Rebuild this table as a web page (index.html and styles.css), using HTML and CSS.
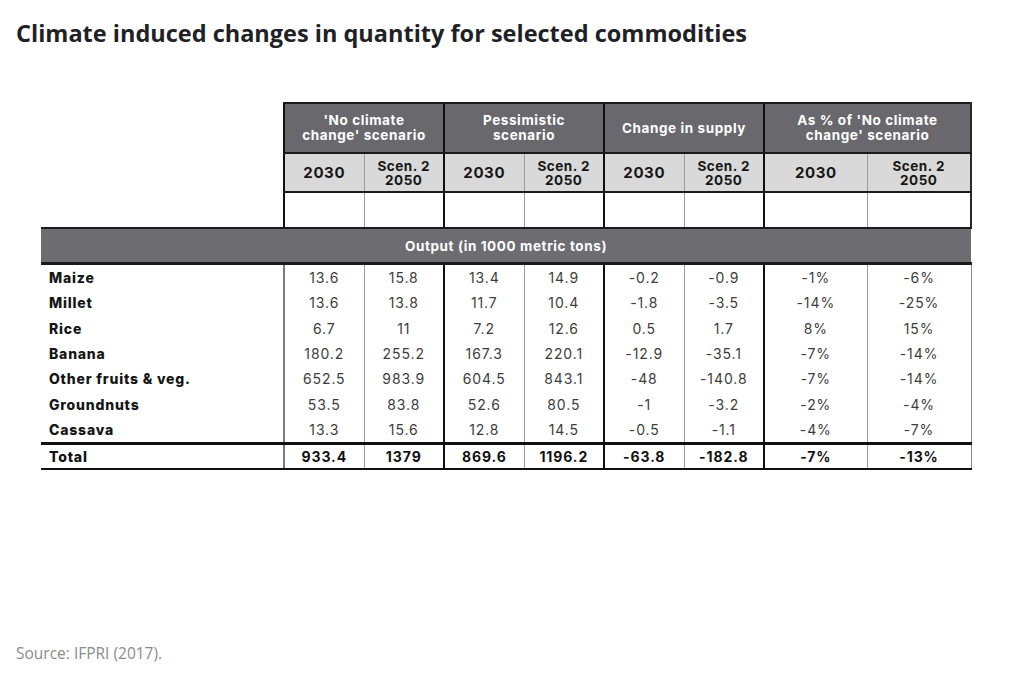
FILE: index.html
```html
<!DOCTYPE html>
<html>
<head>
<meta charset="utf-8">
<link rel="stylesheet" href="styles.css">
</head>
<body>
<div class="page">
  <h1 class="title">Climate induced changes in quantity for selected commodities</h1>
  <table class="data">
    <colgroup>
      <col class="c-label">
      <col class="c-n"><col class="c-n"><col class="c-n"><col class="c-n"><col class="c-n"><col class="c-n">
      <col class="c-w"><col class="c-w2">
    </colgroup>
    <thead>
      <tr class="grp">
        <th class="blank"></th>
        <th colspan="2" class="g">'No climate<br>change' scenario</th>
        <th colspan="2" class="g">Pessimistic<br>scenario</th>
        <th colspan="2" class="g">Change in supply</th>
        <th colspan="2" class="g last">As % of 'No climate<br>change' scenario</th>
      </tr>
      <tr class="sub">
        <th class="blank"></th>
        <th class="g yr">2030</th><th class="i">Scen. 2<br>2050</th>
        <th class="g yr">2030</th><th class="i">Scen. 2<br>2050</th>
        <th class="g yr">2030</th><th class="i">Scen. 2<br>2050</th>
        <th class="g yr">2030</th><th class="i last">Scen. 2<br>2050</th>
      </tr>
      <tr class="empty">
        <td class="blank"></td>
        <td class="g"></td><td class="i"></td>
        <td class="g"></td><td class="i"></td>
        <td class="g"></td><td class="i"></td>
        <td class="g"></td><td class="i last"></td>
      </tr>
      <tr class="bar">
        <td colspan="9">Output (in 1000 metric tons)</td>
      </tr>
    </thead>
    <tbody>
      <tr><th>Maize</th><td class="f">13.6</td><td class="i">15.8</td><td class="g">13.4</td><td class="i">14.9</td><td class="g">-0.2</td><td class="i">-0.9</td><td class="g">-1%</td><td class="i last">-6%</td></tr>
      <tr><th>Millet</th><td class="f">13.6</td><td class="i">13.8</td><td class="g">11.7</td><td class="i">10.4</td><td class="g">-1.8</td><td class="i">-3.5</td><td class="g">-14%</td><td class="i last">-25%</td></tr>
      <tr><th>Rice</th><td class="f">6.7</td><td class="i">11</td><td class="g">7.2</td><td class="i">12.6</td><td class="g">0.5</td><td class="i">1.7</td><td class="g">8%</td><td class="i last">15%</td></tr>
      <tr><th>Banana</th><td class="f">180.2</td><td class="i">255.2</td><td class="g">167.3</td><td class="i">220.1</td><td class="g">-12.9</td><td class="i">-35.1</td><td class="g">-7%</td><td class="i last">-14%</td></tr>
      <tr><th>Other fruits &amp; veg.</th><td class="f">652.5</td><td class="i">983.9</td><td class="g">604.5</td><td class="i">843.1</td><td class="g">-48</td><td class="i">-140.8</td><td class="g">-7%</td><td class="i last">-14%</td></tr>
      <tr><th>Groundnuts</th><td class="f">53.5</td><td class="i">83.8</td><td class="g">52.6</td><td class="i">80.5</td><td class="g">-1</td><td class="i">-3.2</td><td class="g">-2%</td><td class="i last">-4%</td></tr>
      <tr><th>Cassava</th><td class="f">13.3</td><td class="i">15.6</td><td class="g">12.8</td><td class="i">14.5</td><td class="g">-0.5</td><td class="i">-1.1</td><td class="g">-4%</td><td class="i last">-7%</td></tr>
      <tr class="total"><th>Total</th><td class="f">933.4</td><td class="i">1379</td><td class="g">869.6</td><td class="i">1196.2</td><td class="g">-63.8</td><td class="i">-182.8</td><td class="g">-7%</td><td class="i last">-13%</td></tr>
    </tbody>
  </table>
  <p class="source">Source: IFPRI (2017).</p>
</div>
</body>
</html>
```

FILE: styles.css
```css
html, body {
  margin: 0;
  padding: 0;
  background: #ffffff;
}

.page {
  padding: 17px 16px 0 16px;
}

.title {
  margin: 0;
  font-family: "Open Sans", "Noto Sans", sans-serif;
  font-weight: 700;
  font-size: 23.5px;
  line-height: 32px;
  color: #1e2226;
}

.data {
  margin: 53px 0 0 25px;
  border-collapse: collapse;
  table-layout: fixed;
  width: 930px;
  font-family: Inter, "Noto Sans", sans-serif;
  color: #2a2a2a;
}

.c-label { width: 243px; }
.c-n { width: 80px; }
.c-w { width: 103px; }
.c-w2 { width: 104px; }

.data th, .data td {
  padding: 0;
  border: none;
  text-align: center;
}

.data .blank {
  background: transparent;
  border: none;
}

/* group header */
.grp th {
  height: 48px;
  background: #69686d;
  color: #ffffff;
  font-size: 13.5px;
  font-weight: 700;
  line-height: 15px;
  letter-spacing: 0.6px;
  border-top: 2px solid #1b1b1b;
  border-bottom: 2px solid #1b1b1b;
}

/* sub header */
.sub th {
  height: 37px;
  background: #d9d9d9;
  color: #161616;
  font-size: 13.5px;
  font-weight: 700;
  line-height: 14px;
  letter-spacing: 0.5px;
  border-bottom: 2px solid #1b1b1b;
}

.sub th.yr {
  font-size: 15px;
  letter-spacing: 0.6px;
}

/* empty row */
.empty td {
  height: 34px;
  background: #ffffff;
  border-bottom: 2px solid #1b1b1b;
}

/* output bar */
.bar td {
  height: 33px;
  background: #6d6c71;
  color: #ffffff;
  font-size: 13.5px;
  font-weight: 700;
  letter-spacing: 0.6px;
  border-top: 2px solid #1b1b1b;
  border-bottom: 3px solid #1b1b1b;
}

/* body */
.data tbody th {
  text-align: left;
  padding-left: 8px;
  font-size: 14px;
  font-weight: 800;
  color: #151515;
  letter-spacing: 0.8px;
}

.data tbody td {
  height: 25.3px;
  font-size: 14px;
  font-weight: 400;
  color: #3d3d3d;
  letter-spacing: 0.9px;
}

/* column separators */
.data .g { border-left: 2px solid #111111; }
.data .i { border-left: 1px solid #9a9a9a; }
.data .f { border-left: 2px solid #7a7a7a; }
.data .last { border-right: 2px solid #2a2a2a; }
.data tbody .last { border-right: 1px solid #8a8a8a; }

/* total */
.data .total th, .data .total td {
  height: 23px;
  font-weight: 800;
  color: #111111;
  border-top: 3px solid #111111;
  border-bottom: 2px solid #111111;
}

.data .total td {
  font-weight: 700;
}

.source {
  margin: 172px 0 0 0;
  font-family: "Open Sans", "Noto Sans", sans-serif;
  font-size: 15.5px;
  line-height: 22px;
  color: #8a8a8a;
}
```
